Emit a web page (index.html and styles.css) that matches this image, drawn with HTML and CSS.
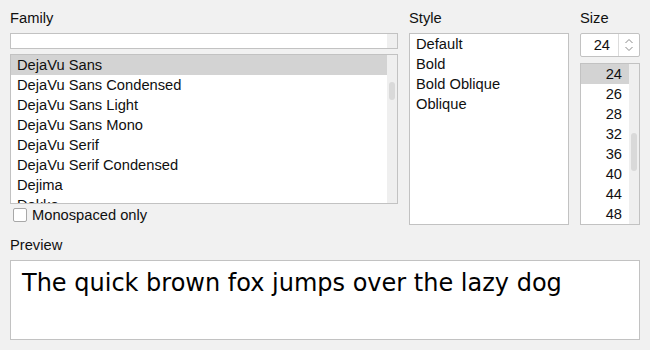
FILE: index.html
```html
<!DOCTYPE html>
<html lang="en">
<head>
  <meta charset="UTF-8">
  <title>Select Font</title>
  <link rel="stylesheet" href="styles.css">
</head>
<body>
  <div class="dialog">
    <div class="columns">
      <div class="col">
        <div class="label">Family</div>
        <div class="search">
          <div class="search-field"></div>
          <div class="search-gutter"></div>
        </div>
        <div class="list family-list">
          <div class="list-items">
            <div class="item selected">DejaVu Sans</div>
            <div class="item">DejaVu Sans Condensed</div>
            <div class="item">DejaVu Sans Light</div>
            <div class="item">DejaVu Sans Mono</div>
            <div class="item">DejaVu Serif</div>
            <div class="item">DejaVu Serif Condensed</div>
            <div class="item">Dejima</div>
            <div class="item">Dokko</div>
          </div>
          <div class="scrollbar">
            <div class="thumb family-thumb"></div>
          </div>
        </div>
        <label class="check">
          <span class="box"></span>
          <span>Monospaced only</span>
        </label>
      </div>

      <div class="col">
        <div class="label">Style</div>
        <div class="list style-list">
          <div class="list-items">
            <div class="item">Default</div>
            <div class="item">Bold</div>
            <div class="item">Bold Oblique</div>
            <div class="item">Oblique</div>
          </div>
        </div>
      </div>

      <div class="col">
        <div class="label">Size</div>
        <div class="spin">
          <div class="spin-value">24</div>
          <div class="spin-arrows">
            <svg width="10" height="16" viewBox="0 0 10 16">
              <path d="M1.5 6 L5 2.5 L8.5 6" fill="none" stroke="#8a8a8a" stroke-width="1"/>
              <path d="M1.5 10 L5 13.5 L8.5 10" fill="none" stroke="#8a8a8a" stroke-width="1"/>
            </svg>
          </div>
        </div>
        <div class="list size-list">
          <div class="list-items">
            <div class="item num selected">24</div>
            <div class="item num">26</div>
            <div class="item num">28</div>
            <div class="item num">32</div>
            <div class="item num">36</div>
            <div class="item num">40</div>
            <div class="item num">44</div>
            <div class="item num">48</div>
          </div>
          <div class="scrollbar">
            <div class="thumb size-thumb"></div>
          </div>
        </div>
      </div>
    </div>

    <div class="label preview-label">Preview</div>
    <div class="preview">The quick brown fox jumps over the lazy dog</div>
  </div>
</body>
</html>
```

FILE: styles.css
```css
:root {
  --bg: #f1f1f1;
  --border: #c2c2c2;
  --selected: #d3d3d3;
  --text: #101010;
}

html, body {
  margin: 0;
  padding: 0;
  background: var(--bg);
}

body {
  font-family: 'Liberation Sans', Arial, sans-serif;
  font-size: 14.7px;
  color: var(--text);
}

.dialog {
  width: 630px;
  padding: 8px 10px 0 10px;
}

.columns {
  display: grid;
  grid-template-columns: 388px 160px 60px;
  column-gap: 11px;
}

.col {
  display: flex;
  flex-direction: column;
}

.label {
  height: 20px;
  line-height: 20px;
  margin-bottom: 5px;
}

.search {
  display: flex;
  height: 14px;
  border: 1px solid var(--border);
  background: #fff;
  margin-bottom: 5px;
}

.search-field {
  flex: 1;
}

.search-gutter {
  width: 10px;
  background: #efefef;
}

.list {
  display: flex;
  border: 1px solid var(--border);
  background: #fff;
  overflow: hidden;
  box-sizing: border-box;
}

.list-items {
  flex: 1;
  overflow: hidden;
}

.item {
  height: 20px;
  line-height: 20px;
  padding-left: 6px;
  white-space: nowrap;
}

.item.selected {
  background: var(--selected);
}

.item.num {
  text-align: right;
  padding: 0 7px 0 0;
}

.scrollbar {
  width: 10px;
  background: #efefef;
  position: relative;
}

.thumb {
  position: absolute;
  left: 2px;
  width: 6px;
  border-radius: 3px;
  background: #d9d9d9;
}

.family-list {
  height: 150px;
}

.family-thumb {
  top: 27px;
  height: 18px;
}

.style-list {
  height: 192px;
}

.spin {
  display: flex;
  height: 24px;
  box-sizing: border-box;
  border: 1px solid var(--border);
  border-radius: 2px;
  background: #fff;
  margin-bottom: 6px;
}

.spin-value {
  width: 37px;
  box-sizing: border-box;
  line-height: 22px;
  text-align: right;
  padding-right: 8px;
}

.spin-arrows {
  flex: 1;
  display: flex;
  align-items: center;
  justify-content: center;
  border-left: 1px solid #dcdcdc;
}

.size-list {
  height: 162px;
}

.size-thumb {
  top: 69px;
  height: 38px;
}

.check {
  display: flex;
  align-items: center;
  gap: 5px;
  margin: 3px 0 0 3px;
  height: 16px;
}

.box {
  width: 12px;
  height: 12px;
  border: 1px solid #a8a8a8;
  border-radius: 2px;
  background: #fff;
}

.preview-label {
  margin-top: 10px;
}

.preview {
  height: 80px;
  border: 1px solid var(--border);
  background: #fff;
  font-family: 'DejaVu Sans', sans-serif;
  font-size: 24px;
  padding: 8px 0 0 11px;
  box-sizing: border-box;
  color: #000;
}
```
